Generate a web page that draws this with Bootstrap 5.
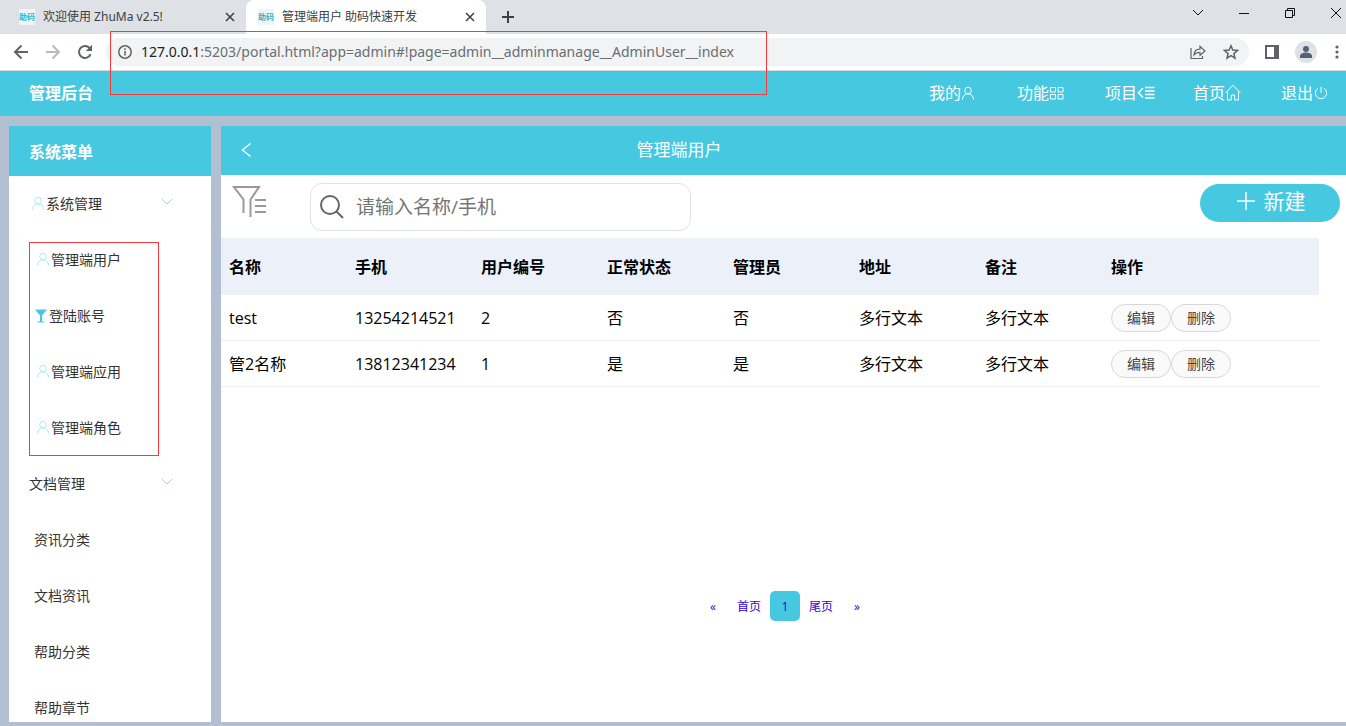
<!DOCTYPE html>
<html lang="zh-CN">
<head>
<meta charset="utf-8">
<meta name="viewport" content="width=device-width, initial-scale=1">
<title>管理端用户 助码快速开发</title>
<link href="https://cdn.jsdelivr.net/npm/bootstrap@5.3.0/dist/css/bootstrap.min.css" rel="stylesheet">
<style>
:root { --cyan: #46c8e1; --slate: #b1bfd0; --mark-red: #f93a3a; }
body { font-family: "Open Sans", "Noto Sans CJK SC", sans-serif; font-size: 16px; line-height: 24px; color: #000; background: var(--slate); }
button { font-family: inherit; }
svg { display: block; flex: none; fill: none; stroke: currentColor; }
a { text-decoration: none; color: inherit; }

/* browser window */
.tabstrip, .toolbar { font-family: "Noto Sans", "Noto Sans CJK SC", sans-serif; }
.tabstrip { height: 34px; background: #dee1e6; font-size: 12px; line-height: 16px; color: #3c4043; padding-right: 4px; }
.tab-item { height: 34px; padding: 0 11px 0 12px; }
.tab-first { width: 246px; padding-left: 19px; }
.tab-active { width: 240px; background: #fff; border-radius: 8px 8px 0 0; }
.favicon { width: 16px; height: 16px; background: #eef5f7; color: #35b4cc; font-size: 8px; line-height: 16px; font-weight: 700; }
.plain { border: 0; background: none; padding: 0; color: inherit; }
.win-btns { gap: 30px; color: #111; }
.toolbar { height: 37px; background: #fff; border-bottom: 1px solid #d5d8dc; color: #5f6368; padding: 0 5px 0 13px; }
.omnibox { height: 28px; border-radius: 14px; background: #f1f3f4; margin-left: 13px; padding: 0 10px 0 12px; gap: 9px; }
.address { font-size: 14px; line-height: 20px; color: #6a6e72; }
.address b { font-weight: 400; color: #202124; }
.avatar { width: 22px; height: 22px; border-radius: 50%; background: #dee1e6; color: #565f79; }
.glyph { fill: currentColor; stroke: none; }
.red-box { position: absolute; border: 1px solid var(--mark-red); pointer-events: none; z-index: 5; }
.red-url { left: 110px; top: -3px; width: 657px; height: 64px; }
.red-menu { left: 20px; top: 10px; width: 130px; height: 214px; }

/* application */
.appbar { height: 45px; background: var(--cyan); color: #fff; padding: 0 0 2px 29px; }
.appbar li { width: 88px; }
.appbar li:last-child { width: 65px; }
.brand-title, .side-title { font-size: 16px; font-weight: 700; }
.workspace { padding: 10px 0 4px 9px; gap: 10px; min-height: 0; }
.sidebar { width: 202px; background: #fff; font-size: 14px; color: #333; }
.side-title { height: 50px; line-height: 52px; padding-left: 20px; background: var(--cyan); color: #fff; }
.entry { height: 56px; line-height: 56px; padding: 0 38px 0 20px; }
.sub .entry { padding-left: 25px; }
.ico-user { color: #9bf3f8; margin: 0 1px 2px 2px; }
.ico-cup { color: var(--cyan); }
.ico-down { color: #b3cddd; }
.panel { background: #fff; min-width: 0; }
.panel-head { height: 49px; background: var(--cyan); color: #fff; padding: 0 240px 2px 19px; }
.panel-title { font-size: 17px; font-weight: 400; line-height: 24px; }
.actions { height: 63px; padding: 8px 6px 0 10px; }
.search { width: 381px; height: 48px; margin-left: 41px; border: 1px solid #e2e2e2; border-radius: 12px; padding: 0 8px; color: #666; gap: 11px; }
.search input { border: 0; outline: 0; font-size: 19px; line-height: 28px; padding: 0; min-width: 0; }
.search input::placeholder { color: #757575; }
.btn-new { width: 140px; height: 38px; margin-top: 1px; border-radius: 19px; background: var(--cyan); color: #fff; border: 0; font-size: 21px; line-height: 24px; gap: 9px; padding: 0 0 4px 2px; }
.list-wrap { padding-right: 27px; }
.grid-list { table-layout: fixed; width: 100%; border-collapse: separate; border-spacing: 0; }
.grid-list th { height: 57px; padding: 0 8px; background: #ecf0f9; font-weight: 700; }
.grid-list td { height: 46px; padding: 0 8px; border-bottom: 1px solid #ecedf5; }
.grid-list .data { width: 126px; }
.btn-row { width: 60px; height: 28px; border: 1px solid #d8d8d8; border-radius: 14px; background: #fafafa; color: #444; font-size: 14px; line-height: 24px; padding: 0; }
.pager { gap: 6px; padding: 0 0 101px 3px; font-size: 12px; color: #2f00dc; }
.pager a { width: 30px; height: 30px; line-height: 32px; border-radius: 5px; text-align: center; white-space: nowrap; }
.pager .current { background: var(--cyan); }
</style>
</head>
<body class="d-flex flex-column vh-100 overflow-hidden">

<svg width="0" height="0" class="position-absolute" aria-hidden="true">
  <symbol id="user" viewBox="0 0 14 14"><circle cx="7" cy="4.5" r="3.3"/><path d="M1.5 13.5c0-3.300 2-5.700 5.500-5.700s5.500 2.400 5.500 5.700"/></symbol>
  <symbol id="close" viewBox="0 0 10 10"><path d="M1 1l8 8M9 1L1 9"/></symbol>
  <symbol id="down" viewBox="0 0 12 8"><path d="M1 1l5 5 5-5"/></symbol>
</svg>

<header>
  <div class="tabstrip d-flex align-items-center">
    <div class="tab-item tab-first d-flex align-items-center gap-2">
      <span class="favicon">助码</span><span class="flex-grow-1">欢迎使用 ZhuMa v2.5!</span>
      <button class="plain" aria-label="关闭"><svg width="10" height="10" stroke-width="1.5"><use href="#close"/></svg></button>
    </div>
    <div class="tab-item tab-active d-flex align-items-center gap-2">
      <span class="favicon">助码</span><span class="flex-grow-1">管理端用户 助码快速开发</span>
      <button class="plain" aria-label="关闭"><svg width="10" height="10" stroke-width="1.5"><use href="#close"/></svg></button>
    </div>
    <button class="plain ms-3" aria-label="新标签页"><svg width="12" height="12" stroke-width="2"><path d="M6 0v12M0 6h12"/></svg></button>
    <div class="win-btns d-flex align-items-center ms-auto pb-2">
      <button class="plain me-1" aria-label="搜索标签页"><svg width="12" height="8"><use href="#down"/></svg></button>
      <button class="plain" aria-label="最小化"><svg width="12" height="12"><path d="M1 6.500h10"/></svg></button>
      <button class="plain ms-1" aria-label="还原"><svg width="12" height="12"><path d="M1.500 3.500h7v7h-7zM3.500 3.500v-2h7v7h-2"/></svg></button>
      <button class="plain ms-1" aria-label="关闭窗口"><svg width="12" height="12"><path d="M1 1l10 10M11 1L1 11"/></svg></button>
    </div>
  </div>
  <div class="toolbar d-flex align-items-center position-relative">
    <div class="d-flex gap-3">
      <button class="plain" aria-label="后退"><svg width="16" height="16" stroke-width="2"><path d="M15 8H2M8.500 1.500L2 8l6.500 6.500"/></svg></button>
      <button class="plain" aria-label="前进"><svg width="16" height="16" stroke-width="2"><path d="M1 8h13M7.500 1.500L14 8l-6.500 6.500" stroke="#b9bbbe"/></svg></button>
      <button class="plain" aria-label="重新加载"><svg width="16" height="16" stroke-width="2"><path d="M13.600 10.200A6 6 0 1 1 12.500 4"/><path d="M15 .8v6.200H8.800z" fill="currentColor" stroke="none"/></svg></button>
    </div>
    <div class="omnibox d-flex align-items-center flex-grow-1">
      <svg width="14" height="14" stroke-width="1.500"><circle cx="7" cy="7" r="6.200"/><path d="M7 6v4.500M7 3.300v1.600"/></svg>
      <span class="address flex-grow-1"><b>127.0.0.1</b>:5203/portal.html?app=admin#!page=admin__adminmanage__AdminUser__index</span>
      <button class="plain me-2" aria-label="分享"><svg width="16" height="16" stroke-width="1.200"><path d="M1 4v10.500h11.500V12M4 11c.3-4 2.300-5.800 6-5.800V2.300l5 4.700-5 4.500V8.400c-3 0-4.500.6-6 2.600z"/></svg></button>
      <button class="plain" aria-label="收藏"><svg width="16" height="16" stroke-width="1.500"><path d="M8 1.800l1.800 4.300 4.700.4-3.600 3.100 1.100 4.600L8 11.700l-4 2.500 1.100-4.600-3.600-3.100 4.700-.4z"/></svg></button>
    </div>
    <button class="plain ms-3" aria-label="侧边栏"><svg width="14" height="14" stroke-width="2"><path d="M1 1h12v12H1z"/><path d="M9 1h4v12H9z" fill="currentColor" stroke="none"/></svg></button>
    <button class="plain avatar ms-3 me-1" aria-label="用户"><svg class="glyph" width="22" height="22"><circle cx="11" cy="8" r="3"/><path d="M5 17v-2c0-2.400 4-3.500 6-3.500s6 1.100 6 3.500v2z"/></svg></button>
    <button class="plain ms-2" aria-label="菜单"><svg class="glyph ms-1" width="8" height="14"><circle cx="4" cy="2" r="1.600"/><circle cx="4" cy="7" r="1.600"/><circle cx="4" cy="12" r="1.600"/></svg></button>
    <div class="red-box red-url"></div>
  </div>
  <nav class="appbar d-flex align-items-center">
    <div class="brand-title">管理后台</div>
    <ul class="list-unstyled d-flex mb-0 ms-auto">
      <li><a href="#" class="d-flex align-items-center">我的<svg width="14" height="14"><use href="#user"/></svg></a></li>
      <li><a href="#" class="d-flex align-items-center">功能<svg width="15" height="14"><path d="M1.500 1.500h5v4.500h-5zM9 1.500h5v4.500H9zM1.500 8.500h5V13h-5zM9 8.500h5V13H9z"/></svg></a></li>
      <li><a href="#" class="d-flex align-items-center">项目<svg width="18" height="14" stroke-width="1.500"><path d="M6 2L1.500 6.800 6 11.500M8 1.500h9.500M8 5h9.500M8 8.500h9.500M8 12h9.500"/></svg></a></li>
      <li><a href="#" class="d-flex align-items-center">首页<svg width="16" height="17"><path d="M.5 9L8 1.300 15.500 9M2.500 8v8h3.800v-5h3.400v5h3.800V8"/></svg></a></li>
      <li><a href="#" class="d-flex align-items-center">退出<svg width="15" height="14"><path d="M8 .8v6M5 2.300a5.600 5.600 0 1 0 6 0"/></svg></a></li>
    </ul>
  </nav>
</header>

<main class="workspace d-flex flex-grow-1">
  <aside class="sidebar flex-shrink-0 overflow-hidden">
    <h1 class="side-title mb-0">系统菜单</h1>
    <nav>
      <a href="#" class="entry d-flex align-items-center"><svg class="ico-user" width="14" height="14"><use href="#user"/></svg>系统管理<svg class="ico-down ms-auto mb-1" width="12" height="8"><use href="#down"/></svg></a>
      <div class="sub position-relative">
        <a href="#" class="entry d-flex align-items-center"><svg class="ico-user" width="14" height="14"><use href="#user"/></svg>管理端用户</a>
        <a href="#" class="entry d-flex align-items-center"><svg class="ico-cup" width="15" height="14"><path d="M1 .5h12L8 6.500v6h2.500v1h-7v-1H6v-6z" fill="currentColor" stroke="none"/></svg>登陆账号</a>
        <a href="#" class="entry d-flex align-items-center"><svg class="ico-user" width="14" height="14"><use href="#user"/></svg>管理端应用</a>
        <a href="#" class="entry d-flex align-items-center"><svg class="ico-user" width="14" height="14"><use href="#user"/></svg>管理端角色</a>
        <div class="red-box red-menu"></div>
      </div>
      <a href="#" class="entry d-flex align-items-center">文档管理<svg class="ico-down ms-auto mb-1" width="12" height="8"><use href="#down"/></svg></a>
      <div class="sub">
        <a href="#" class="entry d-block">资讯分类</a>
        <a href="#" class="entry d-block">文档资讯</a>
        <a href="#" class="entry d-block">帮助分类</a>
        <a href="#" class="entry d-block">帮助章节</a>
      </div>
    </nav>
  </aside>

  <section class="panel d-flex flex-column flex-grow-1">
    <div class="panel-head d-flex align-items-center">
      <button class="plain" aria-label="返回"><svg width="12" height="16" stroke-width="1.300"><path d="M10.500 1.500L2.500 8l8 6.500"/></svg></button>
      <h2 class="panel-title flex-grow-1 text-center mb-0">管理端用户</h2>
    </div>
    <div class="actions d-flex align-items-start">
      <button class="plain" aria-label="筛选"><svg width="38" height="36" stroke-width="2" color="#999"><path d="M12.500 30V16.500L3 4h25L19.500 16.500V34M24 17h11M24 23h11M24 29h11"/></svg></button>
      <label class="search d-flex align-items-center">
        <svg width="26" height="26" stroke-width="2"><circle cx="11" cy="11" r="9"/><path d="M17 17l7 7"/></svg>
        <input type="text" class="flex-grow-1" placeholder="请输入名称/手机" aria-label="名称或手机">
      </label>
      <button class="btn-new d-flex align-items-center justify-content-center ms-auto"><svg width="18" height="18" stroke-width="1.500"><path d="M9 0v18M0 9h18"/></svg>新建</button>
    </div>
    <div class="list-wrap">
      <table class="grid-list">
        <thead>
          <tr><th class="data">名称</th><th class="data">手机</th><th class="data">用户编号</th><th class="data">正常状态</th><th class="data">管理员</th><th class="data">地址</th><th class="data">备注</th><th>操作</th></tr>
        </thead>
        <tbody>
          <tr><td>test</td><td>13254214521</td><td>2</td><td>否</td><td>否</td><td>多行文本</td><td>多行文本</td><td><div class="d-flex"><button class="btn-row">编辑</button><button class="btn-row">删除</button></div></td></tr>
          <tr><td>管2名称</td><td>13812341234</td><td>1</td><td>是</td><td>是</td><td>多行文本</td><td>多行文本</td><td><div class="d-flex"><button class="btn-row">编辑</button><button class="btn-row">删除</button></div></td></tr>
        </tbody>
      </table>
    </div>
    <nav class="pager d-flex justify-content-center mt-auto" aria-label="分页">
      <a href="#">«</a><a href="#">首页</a><a href="#" class="current">1</a><a href="#">尾页</a><a href="#">»</a>
    </nav>
  </section>
</main>

<script src="https://cdn.jsdelivr.net/npm/bootstrap@5.3.0/dist/js/bootstrap.bundle.min.js"></script>
</body>
</html>
